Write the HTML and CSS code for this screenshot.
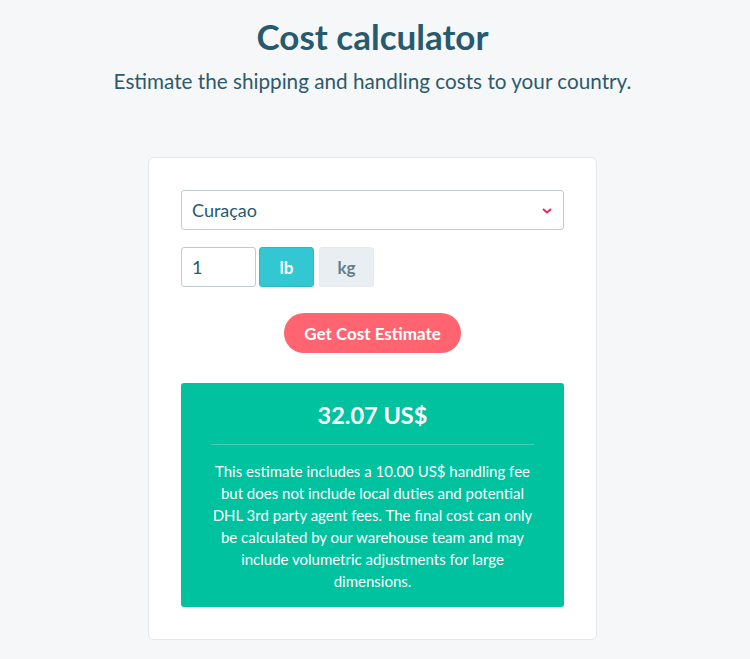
FILE: index.html
```html
<!DOCTYPE html>
<html lang="en">
<head>
    <meta charset="UTF-8">
    <meta name="viewport" content="width=device-width, initial-scale=1.0">
    <title>Cost calculator</title>
    <link rel="stylesheet" href="styles.css">
</head>
<body>

<div class="page">
    <h1 class="title">Cost calculator</h1>
    <p class="subtitle">Estimate the shipping and handling costs to your country.</p>

    <div class="card">
        <div class="select-wrap">
            <select class="country-select" id="country">
                <option>Curaçao</option>
            </select>
            <svg class="chevron" width="10" height="6" viewBox="0 0 10 6">
                <path d="M1 1 L5 4.5 L9 1" fill="none" stroke="#e9245a" stroke-width="2"/>
            </svg>
        </div>

        <div class="weight-row">
            <input class="weight-input" type="text" value="1">
            <button class="unit-button active">lb</button>
            <button class="unit-button">kg</button>
        </div>

        <div class="action">
            <button class="estimate-button">Get Cost Estimate</button>
        </div>

        <div class="result">
            <div class="result-price">32.07 US$</div>
            <p class="result-note">This estimate includes a 10.00 US$ handling fee but does not include local duties and potential DHL 3rd party agent fees. The final cost can only be calculated by our warehouse team and may include volumetric adjustments for large dimensions.</p>
        </div>
    </div>
</div>

</body>
</html>
```

FILE: styles.css
```css
body {
    font-family: Lato, 'Open Sans', sans-serif;
    margin: 0;
    background: #f5f7f9;
    color: #275a6e;
}
.page {
    display: flex;
    flex-direction: column;
    align-items: center;
    padding: 14px 5px 0 0;
}
.title {
    margin: 0;
    font-size: 35px;
    font-weight: 700;
    line-height: 44px;
    color: #275a6e;
}
.subtitle {
    margin: 11px 0 0;
    font-size: 20.7px;
    line-height: 24px;
    color: #2c5a6d;
}
.card {
    margin-top: 64px;
    width: 383px;
    padding: 32px;
    background: #fff;
    border: 1px solid #e3e8ec;
    border-radius: 6px;
}
.select-wrap {
    position: relative;
}
.country-select {
    display: block;
    width: 100%;
    height: 40px;
    padding: 0 10px;
    border: 1px solid #bfccd3;
    border-radius: 3px;
    background: #fff;
    font-family: inherit;
    font-size: 18px;
    color: #275a6e;
    appearance: none;
    -webkit-appearance: none;
}
.chevron {
    position: absolute;
    right: 12px;
    top: 18px;
}
.weight-row {
    display: flex;
    margin-top: 17px;
}
.weight-input {
    width: 75px;
    height: 40px;
    box-sizing: border-box;
    padding: 0 10px;
    border: 1px solid #bfccd3;
    border-radius: 3px;
    font-family: inherit;
    font-size: 18px;
    color: #275a6e;
}
.unit-button {
    width: 55px;
    height: 40px;
    margin-left: 4px;
    border: 1px solid #e3e9ec;
    border-radius: 3px;
    background: #e8eef1;
    font-family: inherit;
    font-size: 17px;
    font-weight: 700;
    color: #627e8c;
}
.unit-button.active {
    margin-left: 3px;
    border-color: #2cb9c6;
    background: #33c7d4;
    color: #fff;
}
.unit-button.active + .unit-button {
    margin-left: 5px;
}
.action {
    display: flex;
    justify-content: center;
    margin-top: 26px;
}
.estimate-button {
    height: 40px;
    padding: 0 20px;
    border: none;
    border-radius: 20px;
    background: #ff6470;
    font-family: inherit;
    font-size: 17px;
    font-weight: 700;
    color: #fff;
}
.result {
    margin-top: 30px;
    padding: 16px 30px 15px;
    background: #00c29f;
    border-radius: 3px;
    color: #fff;
    text-align: center;
}
.result-price {
    font-size: 23.5px;
    font-weight: 700;
    line-height: 32px;
    padding-bottom: 13px;
    border-bottom: 1px solid rgba(255, 255, 255, 0.25);
}
.result-note {
    margin: 15px 0 0;
    font-size: 15px;
    line-height: 22px;
}
```
